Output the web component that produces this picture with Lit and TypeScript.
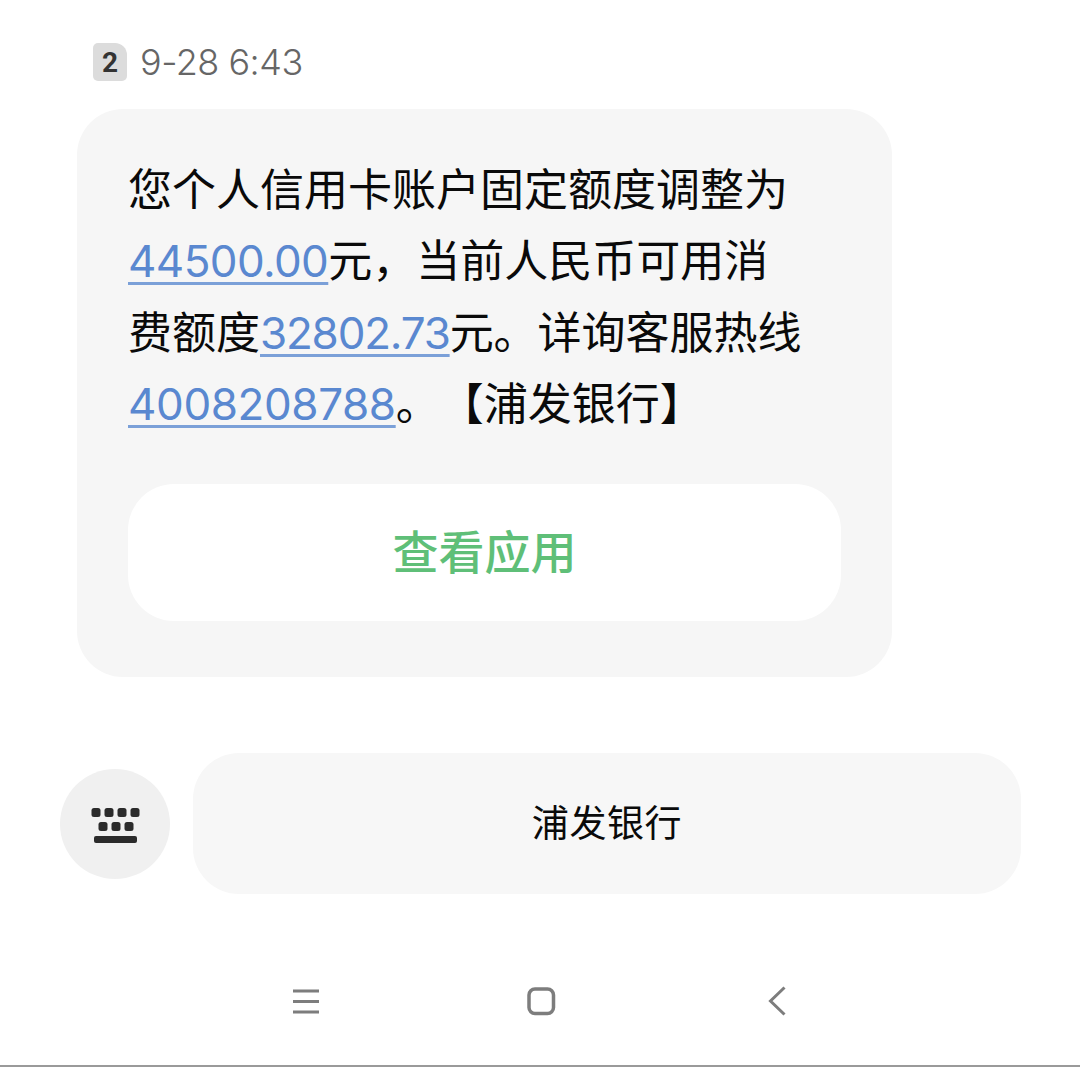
import { LitElement, css, html } from "lit";
import { customElement } from "lit/decorators.js";

@customElement("app-root")
export class AppRoot extends LitElement {
  static styles = css`
    :host {
      display: flex;
      flex-direction: column;
      box-sizing: border-box;
      height: 1067px;
      background: #fff;
      border-bottom: 2px solid #9a9a9a;
      font-family: Inter, "Noto Sans CJK SC", sans-serif;
      color: #0a0a0a;
    }
    .stamp {
      display: flex;
      align-items: center;
      gap: 13px;
      height: 109px;
      box-sizing: border-box;
      padding: 15px 0 0 93px;
    }
    .sim {
      width: 34px;
      height: 38px;
      display: flex;
      align-items: center;
      justify-content: center;
      background: #dcdcdc;
      border-radius: 5px 12px 5px 5px;
      color: #333;
      font-size: 28px;
      font-weight: 700;
      font-family: Roboto, sans-serif;
    }
    .time {
      font-size: 36px;
      font-weight: 300;
      letter-spacing: -0.5px;
      color: #666;
      font-family: Inter, sans-serif;
    }
    .card {
      width: 815px;
      box-sizing: border-box;
      margin-left: 77px;
      padding: 46px 51px 56px;
      background: #f6f6f6;
      border-radius: 46px;
    }
    .body {
      font-size: 44px;
      line-height: 71.3px;
      white-space: nowrap;
      text-spacing-trim: space-all;
    }
    .link {
      color: #5a88d0;
      text-decoration: underline;
      text-decoration-color: #7ba0d8;
      text-decoration-thickness: 3px;
      text-underline-offset: 5px;
      text-decoration-skip-ink: none;
    }
    .limit {
      letter-spacing: -0.6px;
    }
    .balance {
      letter-spacing: -1.2px;
    }
    .phone {
      letter-spacing: -0.4px;
    }
    .action {
      margin-top: 44px;
      height: 137px;
      box-sizing: border-box;
      padding-bottom: 8px;
      display: flex;
      align-items: center;
      justify-content: center;
      background: #fff;
      border-radius: 46px;
      color: #5fbf78;
      font-size: 46px;
      font-weight: 500;
    }
    .reply {
      display: flex;
      align-items: center;
      gap: 23px;
      margin-top: 76px;
      padding-left: 60px;
    }
    .round {
      width: 110px;
      height: 110px;
      border-radius: 50%;
      background: #f0f0f0;
      display: flex;
      align-items: center;
      justify-content: center;
    }
    .chip {
      width: 828px;
      height: 141px;
      box-sizing: border-box;
      padding-bottom: 6px;
      display: flex;
      align-items: center;
      justify-content: center;
      background: #f7f7f7;
      border-radius: 46px;
      font-size: 37px;
      letter-spacing: 0.6px;
    }
    .nav {
      display: flex;
      align-items: center;
      gap: 195px;
      margin-top: 87px;
      padding-left: 286px;
    }
    .nav svg {
      display: block;
      width: 40px;
      height: 40px;
      fill: none;
      stroke: #7d7d7d;
      stroke-width: 3;
    }
    .nav .home {
      stroke-width: 3.5;
    }
  `;

  render() {
    return html`
      <div class="stamp">
        <span class="sim">2</span>
        <span class="time">9-28 6:43</span>
      </div>
      <section class="card">
        <div class="body">
          您个人信用卡账户固定额度调整为<br />
          <span class="link limit">44500.00</span>元，当前人民币可用消<br />
          费额度<span class="link balance">32802.73</span>元。详询客服热线<br />
          <span class="link phone">4008208788</span>。【浦发银行】
        </div>
        <div class="action">查看应用</div>
      </section>
      <div class="reply">
        <div class="round">
          <svg width="50" height="40" viewBox="0 0 50 40" fill="#2b2b2b">
            <rect x="1.500" y="4" width="9" height="9" rx="2.500" />
            <rect x="14.500" y="4" width="9" height="9" rx="2.500" />
            <rect x="27.500" y="4" width="9" height="9" rx="2.500" />
            <rect x="40.500" y="4" width="9" height="9" rx="2.500" />
            <rect x="8.500" y="18" width="9" height="9" rx="2.500" />
            <rect x="21.500" y="18" width="9" height="9" rx="2.500" />
            <rect x="34.500" y="18" width="9" height="9" rx="2.500" />
            <rect x="4" y="32" width="43" height="7" rx="2" />
          </svg>
        </div>
        <div class="chip">浦发银行</div>
      </div>
      <nav class="nav">
        <svg viewBox="0 0 40 40">
          <path d="M7 10h26M7 20.500h26M7 31h26" />
        </svg>
        <svg class="home" viewBox="0 0 40 40">
          <rect x="8" y="8" width="24.500" height="24.500" rx="6" />
        </svg>
        <svg viewBox="0 0 40 40">
          <path d="M28.500 6.500 L14.500 20 L28.500 33.500" />
        </svg>
      </nav>
    `;
  }
}
